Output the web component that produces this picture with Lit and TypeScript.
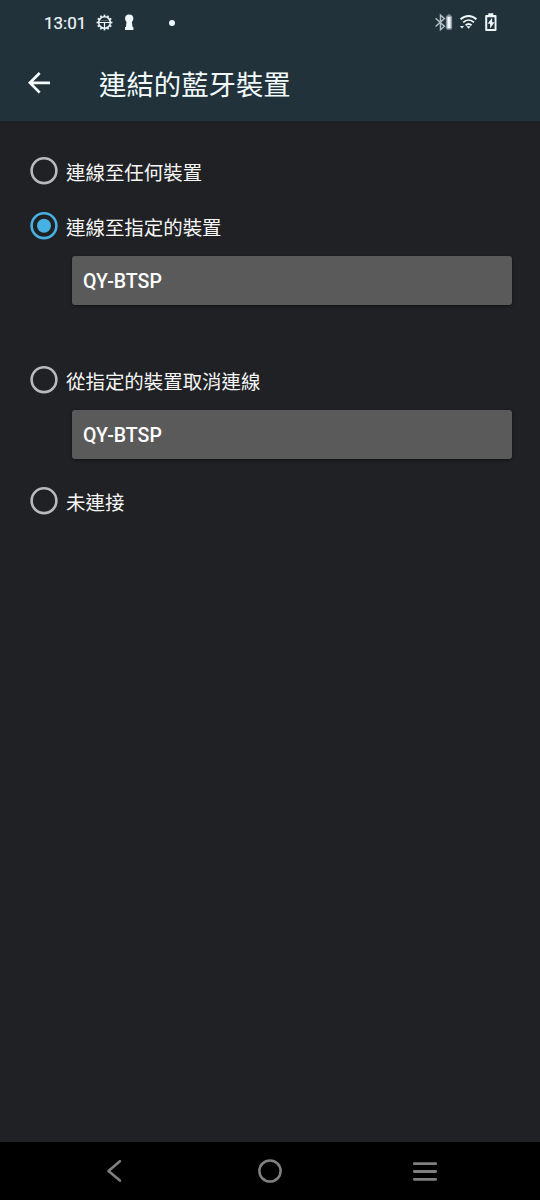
import { LitElement, html, css, svg, nothing } from "lit";
import { customElement, property, state } from "lit/decorators.js";

@customElement("status-bar")
class StatusBar extends LitElement {
  static styles = css`
    :host {
      display: flex;
      justify-content: space-between;
      height: 45px;
      color: #eef7fa;
    }
    .left,
    .right {
      display: flex;
      align-items: center;
    }
    .left {
      padding-left: 44px;
    }
    .right {
      padding-right: 43px;
    }
    .time {
      width: 52px;
      font: 400 17px/20px Roboto, sans-serif;
      -webkit-text-stroke: 0.2px currentColor;
    }
    .keyhole {
      margin-left: 10px;
    }
    .dot {
      width: 6px;
      height: 6px;
      margin-left: 35px;
      border-radius: 50%;
      background: currentColor;
    }
    .wifi {
      margin-left: 7px;
    }
    .battery {
      margin-left: 8px;
    }
    svg {
      display: block;
    }
  `;

  render() {
    const teeth = Array.from({ length: 12 }, (_, i) => i * 30);
    return html`
      <div class="left">
        <span class="time">13:01</span>
        <svg width="17" height="45" viewBox="0 0 17 45" fill="none" stroke="currentColor">
          <circle cx="8.5" cy="22.5" r="5.8" stroke-width="1.5" />
          ${teeth.map(
            (a) => svg`<path d="M8.5 14.6v2" stroke-width="1.7" transform="rotate(${a} 8.5 22.5)" />`
          )}
          <path d="M3 22.5h11M8.5 22.5v5.5" stroke-width="1.2" />
          <path d="M4.5 20.5h8" stroke-width="1" opacity=".25" />
        </svg>
        <svg class="keyhole" width="11" height="45" viewBox="0 0 11 45" fill="currentColor">
          <circle cx="6.2" cy="18.6" r="4.1" />
          <path d="M3.6 21h5.2l.7 6h.9v3H2v-3h.9z" />
        </svg>
        <span class="dot"></span>
      </div>
      <div class="right">
        <svg width="18" height="45" viewBox="0 0 18 45" fill="none" stroke="currentColor">
          <path d="M.6 18.3l8.8 8-3.9 3.4V15.2l3.9 3.3-8.8 8" stroke-width="1.5" opacity=".72" />
          <rect x="11.6" y="16" width="4.8" height="13" rx="1.2" fill="currentColor" stroke="#89959a" stroke-width="1.5" />
          <path d="M12.8 15h2.4" stroke="#89959a" stroke-width="1.3" />
        </svg>
        <svg class="wifi" width="17" height="45" viewBox="0 0 17 45" fill="none" stroke="currentColor">
          <path d="M.6 19.3C5.2 14.9 11.9 14.9 16.4 19.3M3.2 22.4c3.2-3 7.6-3 10.8 0M5.6 25.2c1.9-1.6 4.2-1.6 6 0" stroke-width="1.9" />
          <path d="M6.4 26.3h4.3l-2.1 2.4zM0 26h4l-2 2.4z" fill="currentColor" stroke="none" />
        </svg>
        <svg class="battery" width="12" height="45" viewBox="0 0 12 45">
          <path d="M3.3 13.2h5v1.9h2.2q1 0 1 1v13.8q0 1-1 1h-9.3q-1 0-1-1V16.1q0-1 1-1h2.1zM2.2 17.2v11.7h7.4V17.2z" fill="currentColor" fill-rule="evenodd" />
          <path d="M7.1 17.7l-4.5 6h2.5v4.7l4.4-6.1H7.1z" fill="currentColor" />
        </svg>
      </div>
    `;
  }
}

@customElement("radio-option")
class RadioOption extends LitElement {
  @property() label = "";
  @property({ type: Boolean }) checked = false;

  static styles = css`
    :host {
      display: flex;
      align-items: center;
      height: 55px;
      padding-left: 30px;
      cursor: pointer;
    }
    .ring {
      display: block;
      color: #b9babb;
    }
    .ring.on {
      color: #48b1e3;
    }
    .label {
      margin: 2px 0 0 8px;
      font: 400 19.45px/28px "Noto Sans CJK TC", sans-serif;
      color: #f6f6f6;
      white-space: nowrap;
    }
  `;

  render() {
    return html`
      <svg class="ring ${this.checked ? "on" : ""}" width="28" height="28" viewBox="0 0 28 28">
        <circle cx="14" cy="13.7" r="12.4" fill="none" stroke="currentColor" stroke-width="2.6" />
        ${this.checked ? svg`<circle cx="14" cy="13.7" r="7" fill="currentColor" />` : nothing}
      </svg>
      <span class="label">${this.label}</span>
    `;
  }
}

@customElement("app-root")
class AppRoot extends LitElement {
  @state() private selected = "specific";

  static styles = css`
    :host {
      display: flex;
      flex-direction: column;
      height: 1200px;
      background: #202124;
      overflow: hidden;
    }
    header {
      height: 121px;
      background: #21323b;
    }
    .toolbar {
      display: flex;
      align-items: center;
      height: 76px;
      padding-left: 26px;
    }
    .back {
      display: block;
    }
    h1 {
      margin: 0 0 0 47px;
      font: 400 27.4px/40px "Noto Sans CJK TC", sans-serif;
      color: #f2fafc;
    }
    main {
      flex: 1;
      padding-top: 22px;
    }
    .device {
      display: flex;
      align-items: center;
      box-sizing: border-box;
      width: 440px;
      height: 49px;
      margin: 3px 0 0 72px;
      padding: 2px 0 0 11px;
      border: 0;
      border-radius: 3px;
      background: #5a5a5b;
      box-shadow: 0 1px 3px rgba(0, 0, 0, 0.5);
      color: #fff;
      font: 500 19.5px/24px Roboto, sans-serif;
    }
    .connect {
      margin-bottom: 47px;
    }
    .disconnect {
      margin-bottom: 14px;
    }
    nav {
      display: flex;
      justify-content: space-between;
      align-items: center;
      height: 58px;
      padding: 0 102px 0 101px;
      background: #000;
      color: #808080;
    }
    nav svg {
      display: block;
    }
  `;

  private option(id: string, label: string) {
    return html`<radio-option
      label=${label}
      ?checked=${this.selected === id}
      @click=${() => (this.selected = id)}
    ></radio-option>`;
  }

  render() {
    return html`
      <header>
        <status-bar></status-bar>
        <div class="toolbar">
          <svg class="back" width="26" height="26" viewBox="0 0 26 26" fill="none" stroke="#f5fcff" stroke-width="2.7">
            <path d="M24 12.8H4M13.7 3L3.9 12.8l9.8 9.8" />
          </svg>
          <h1>連結的藍牙裝置</h1>
        </div>
      </header>
      <main>
        ${this.option("any", "連線至任何裝置")}
        ${this.option("specific", "連線至指定的裝置")}
        <button class="device connect">QY-BTSP</button>
        ${this.option("disconnect", "從指定的裝置取消連線")}
        <button class="device disconnect">QY-BTSP</button>
        ${this.option("none", "未連接")}
      </main>
      <nav>
        <svg width="26" height="26" viewBox="0 0 26 26" fill="none" stroke="currentColor" stroke-width="2.6" stroke-linecap="round" stroke-linejoin="round">
          <path d="M18.9 3.2L7.5 12.9l11.4 9.7" />
        </svg>
        <svg width="26" height="26" viewBox="0 0 26 26" fill="none" stroke="currentColor" stroke-width="2.5">
          <circle cx="13" cy="13" r="10.6" />
        </svg>
        <svg width="26" height="26" viewBox="0 0 26 26" fill="none" stroke="currentColor" stroke-width="2.8" stroke-linecap="round">
          <path d="M2.3 5.7h21.4M2.3 13.5h21.4M2.3 21.3h21.4" />
        </svg>
      </nav>
    `;
  }
}
